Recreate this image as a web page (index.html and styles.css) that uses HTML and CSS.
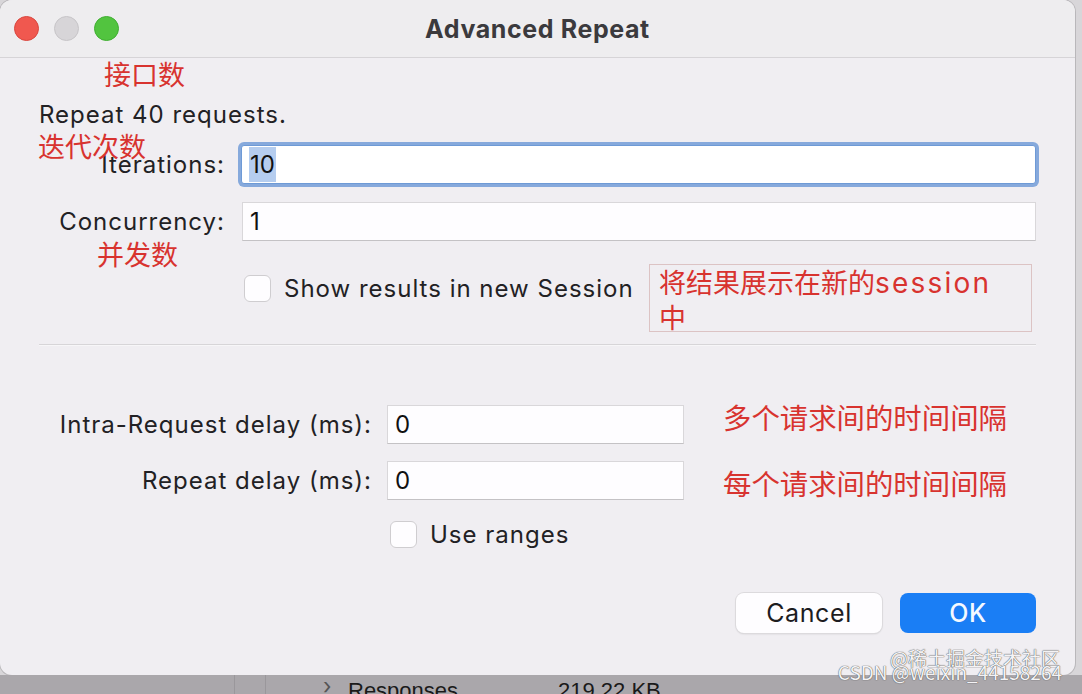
FILE: index.html
```html
<!DOCTYPE html>
<html lang="zh">
<head>
<meta charset="utf-8">
<title>Advanced Repeat</title>
<link rel="stylesheet" href="styles.css">
</head>
<body>
<div class="screen">
  <div class="dialog">
    <div class="titlebar">
      <div class="lights">
        <span class="light light-red"></span>
        <span class="light light-gray"></span>
        <span class="light light-green"></span>
      </div>
      <div class="title">Advanced Repeat</div>
    </div>
    <div class="content">
      <p class="summary">Repeat 40 requests.</p>
      <div class="form-top">
        <label class="label">Iterations:</label>
        <div class="field field-focused"><span class="selected">10</span></div>
        <label class="label">Concurrency:</label>
        <div class="field">1</div>
        <div></div>
        <div class="check-row"><span class="checkbox"></span><span>Show results in new Session</span></div>
      </div>
      <div class="separator"></div>
      <div class="form-delay">
        <label class="label">Intra-Request delay (ms):</label>
        <div class="field">0</div>
        <label class="label">Repeat delay (ms):</label>
        <div class="field">0</div>
        <div></div>
        <div class="check-row check-small"><span class="checkbox"></span><span>Use ranges</span></div>
      </div>
      <div class="buttons">
        <button class="btn btn-cancel">Cancel</button>
        <button class="btn btn-ok">OK</button>
      </div>
    </div>

    <div class="note note-count">接口数</div>
    <div class="note note-iter">迭代次数</div>
    <div class="note note-conc">并发数</div>
    <div class="note-box">将结果展示在新的<span class="latin">session</span><br>中</div>
    <div class="note note-intra">多个请求间的时间间隔</div>
    <div class="note note-repeat">每个请求间的时间间隔</div>
  </div>
  <div class="backdrop">
    <span class="bd-line bd-line1"></span>
    <span class="bd-line bd-line2"></span>
    <span class="bd-chevron">›</span>
    <span class="bd-name">Responses</span>
    <span class="bd-size">219.22 KB</span>
  </div>
  <div class="watermark">
    <div class="wm1">@稀土掘金技术社区</div>
    <div class="wm2">CSDN @weixin_44158264</div>
  </div>
</div>
</body>
</html>
```

FILE: styles.css
```css
* { box-sizing: border-box; }
html, body { margin: 0; padding: 0; }
body {
  width: 1082px;
  height: 694px;
  overflow: hidden;
  background: #a9a6aa;
  font-family: "Inter", "Noto Sans", "Noto Sans CJK SC", sans-serif;
  color: #222124;
}
.screen {
  position: relative;
  width: 1082px;
  height: 694px;
  background: #d8d6d9;
}
.dialog {
  position: relative;
  width: 1075px;
  height: 675px;
  background: #f0eef2;
  border-radius: 12px;
  overflow: hidden;
  box-shadow: 0 0 0 1px #b9b7ba;
}
.titlebar {
  height: 58px;
  background: #eeedef;
  border-bottom: 1px solid #d6d4d7;
  display: flex;
  align-items: center;
  position: relative;
}
.lights {
  display: flex;
  gap: 15px;
  padding-left: 14px;
}
.light {
  width: 25px;
  height: 25px;
  border-radius: 50%;
  display: block;
}
.light-red { background: #f0584f; border: 1px solid #d9473f; }
.light-gray { background: #d7d5d8; border: 1px solid #c7c5c8; }
.light-green { background: #52c43f; border: 1px solid #3faf31; }
.title {
  position: absolute;
  left: 0;
  right: 0;
  text-align: center;
  font-weight: 700;
  font-size: 25px;
  letter-spacing: 0.6px;
  color: #3b3a3d;
}
.content {
  padding: 0 39px;
}
.summary {
  margin: 44px 0 0;
  font-size: 24px;
  letter-spacing: 1px;
  line-height: 26px;
}
.form-top {
  display: grid;
  grid-template-columns: 186px 794px;
  column-gap: 17px;
  row-gap: 18px;
  margin-top: 17px;
  align-items: center;
}
.label {
  text-align: right;
  font-size: 24px;
  line-height: 27px;
  letter-spacing: 1px;
  white-space: nowrap;
}
.field {
  height: 39px;
  background: #fefdff;
  border: 1px solid #d9d7da;
  border-bottom-color: #c4c2c5;
  font-size: 24px;
  line-height: 37px;
  padding-left: 7px;
  color: #111;
}
.field-focused {
  margin-left: -1px;
  width: 795px;
  border: 1px solid #6e9ad6;
  box-shadow: 0 0 0 3px #86a9dc;
  border-radius: 3px;
  background: #fff;
}
.selected {
  background: #b5cdef;
  padding: 3px 1px;
}
.check-row {
  display: flex;
  align-items: center;
  gap: 13px;
  font-size: 24px;
  line-height: 27px;
  height: 27px;
  letter-spacing: 1px;
  margin-top: 16px;
  padding-left: 2px;
}
.checkbox {
  width: 27px;
  height: 27px;
  border: 1px solid #cfcdd0;
  border-radius: 6px;
  background: #fefdff;
  display: block;
  flex: none;
}
.separator {
  margin-top: 42px;
  height: 2px;
  background: #d7d5d8;
  border-bottom: 1px solid #f7f6f8;
}
.form-delay {
  display: grid;
  grid-template-columns: 333px 297px;
  column-gap: 15px;
  row-gap: 17px;
  margin-top: 59px;
  align-items: center;
}
.check-small {
  margin-top: 4px;
  padding-left: 3px;
}
.buttons {
  display: flex;
  justify-content: flex-end;
  gap: 18px;
  margin-top: 45px;
}
.btn {
  height: 40px;
  border-radius: 8px;
  font-family: inherit;
  font-size: 25px;
  letter-spacing: 0.6px;
  border: none;
  padding: 0;
}
.btn-cancel {
  width: 146px;
  background: #fefdff;
  color: #1d1c1f;
  box-shadow: 0 0 0 1px #dcdadd, 0 1px 2px rgba(0,0,0,0.15);
}
.btn-ok {
  width: 136px;
  background: #1a7ef5;
  color: #f4f9ff;
  font-weight: 500;
}

.note {
  position: absolute;
  color: #d8332f;
  font-family: "Noto Sans CJK SC", sans-serif;
  font-size: 27px;
  line-height: 30px;
  white-space: nowrap;
}
.note-count { left: 104px; top: 59px; }
.note-iter { left: 38px; top: 131px; }
.note-conc { left: 97px; top: 239px; }
.note-intra { left: 723px; top: 402px; font-size: 28.4px; }
.note-repeat { left: 723px; top: 468px; font-size: 28.4px; }
.note-box {
  position: absolute;
  left: 649px;
  top: 264px;
  width: 383px;
  height: 68px;
  border: 1px solid #dcc3c4;
  padding: 0 0 0 9px;
  color: #d8332f;
  font-family: "Noto Sans CJK SC", sans-serif;
  font-size: 27px;
  line-height: 33px;
}
.latin {
  font-family: "Inter", sans-serif;
  font-size: 28px;
  letter-spacing: 2.2px;
}

.backdrop {
  position: absolute;
  left: 0;
  top: 675px;
  width: 1082px;
  height: 19px;
  background: #aaa7ab;
  overflow: hidden;
}
.bd-line {
  position: absolute;
  top: 0;
  width: 1px;
  height: 19px;
  background: #9a979b;
}
.bd-line1 { left: 234px; }
.bd-line2 { left: 265px; }
.bd-chevron {
  position: absolute;
  left: 323px;
  top: 0;
  font-size: 22px;
  line-height: 22px;
  color: #555;
}
.bd-name, .bd-size {
  position: absolute;
  top: 4px;
  font-family: "Liberation Sans", sans-serif;
  font-size: 22px;
  line-height: 24px;
  color: #1a1a1a;
}
.bd-name { left: 348px; }
.bd-size { left: 558px; }

.watermark {
  position: absolute;
  right: 20px;
  top: 648px;
  text-align: right;
  font-family: "Noto Sans CJK SC", sans-serif;
  color: #f4f3f5;
  text-shadow: 0 0 1px #555, 0 0 1px #555;
}
.wm1 { font-size: 19px; line-height: 20px; padding-right: 2px; }
.wm2 { font-size: 19px; line-height: 20px; margin-top: -6px; }
```
